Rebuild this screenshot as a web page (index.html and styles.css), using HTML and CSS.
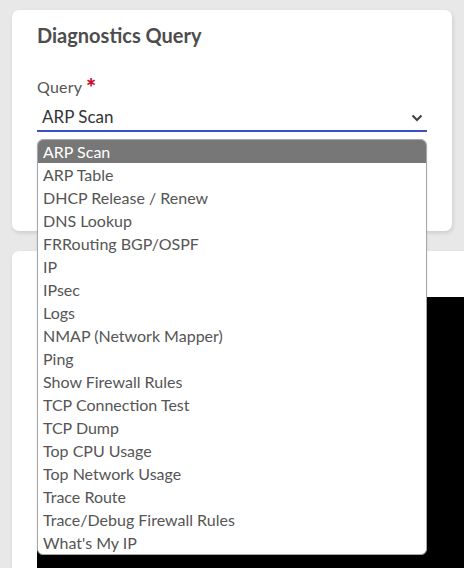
FILE: index.html
```html
<!DOCTYPE html>
<html>
<head>
<meta charset="utf-8">
<link rel="stylesheet" href="styles.css">
</head>
<body>
<div class="page">
  <section class="card card-query">
    <h2 class="title">Diagnostics Query</h2>
    <div class="field">
      <label class="label">Query <span class="req">*</span></label>
      <div class="select">
        <span class="value">ARP Scan</span>
        <svg class="chev" width="12" height="8" viewBox="0 0 12 8"><path d="M1.5 1.5 L6 6 L10.5 1.5" fill="none" stroke="#444" stroke-width="2.2"/></svg>
      </div>
      <ul class="menu">
        <li class="opt active">ARP Scan</li>
        <li class="opt">ARP Table</li>
        <li class="opt">DHCP Release / Renew</li>
        <li class="opt">DNS Lookup</li>
        <li class="opt">FRRouting BGP/OSPF</li>
        <li class="opt">IP</li>
        <li class="opt">IPsec</li>
        <li class="opt">Logs</li>
        <li class="opt">NMAP (Network Mapper)</li>
        <li class="opt">Ping</li>
        <li class="opt">Show Firewall Rules</li>
        <li class="opt">TCP Connection Test</li>
        <li class="opt">TCP Dump</li>
        <li class="opt">Top CPU Usage</li>
        <li class="opt">Top Network Usage</li>
        <li class="opt">Trace Route</li>
        <li class="opt">Trace/Debug Firewall Rules</li>
        <li class="opt">What's My IP</li>
      </ul>
    </div>
  </section>
  <section class="card card-output">
    <div class="terminal"></div>
  </section>
</div>
</body>
</html>
```
FILE: styles.css
```css
* { box-sizing: border-box; }
html, body { margin: 0; padding: 0; }
body {
  background: #e8e8e8;
  font-family: Lato, "Open Sans", sans-serif;
  color: #555;
  width: 464px;
  height: 568px;
  overflow: hidden;
}
.page {
  padding: 10px 12px 0 12px;
  display: flex;
  flex-direction: column;
  gap: 20px;
  height: 568px;
  overflow: hidden;
}
.card {
  background: #fff;
  border-radius: 7px;
  box-shadow: 1px 2px 4px rgba(0,0,0,0.12);
}
.card-query {
  height: 221px;
  flex: none;
  padding: 13px 25px 0 25px;
  position: relative;
  z-index: 2;
}
.title {
  margin: 0;
  font-size: 20px;
  font-weight: 700;
  color: #4d4d4d;
  line-height: 24px;
}
.field {
  margin-top: 30px;
  position: relative;
}
.label {
  display: block;
  font-size: 16px;
  line-height: 20px;
  color: #555;
  letter-spacing: 0.2px;
}
.req {
  color: #c8102e;
  font-weight: 900;
  font-size: 24px;
  line-height: 10px;
  vertical-align: -4px;
}
.select {
  margin-top: 9px;
  height: 26px;
  border-bottom: 2px solid #3a50c6;
  display: flex;
  align-items: flex-start;
  justify-content: space-between;
  padding: 1px 4px 0 5px;
}
.value {
  font-size: 17px;
  color: #333;
  line-height: 19px;
}
.chev { margin-top: 7px; }
.menu {
  position: absolute;
  left: 0;
  top: 62px;
  width: 390px;
  margin: 0;
  padding: 0;
  list-style: none;
  background: #fff;
  border: 1px solid #a8a8a8;
  border-radius: 6px;
  overflow: hidden;
  box-shadow: 0 1px 2px rgba(0,0,0,0.15);
}
.opt {
  height: 23px;
  line-height: 23px;
  padding-left: 5px;
  font-size: 16px;
  color: #555;
  white-space: nowrap;
}
.opt.active {
  background: #777;
  color: #fff;
}
.card-output {
  flex: 1 1 auto;
  margin-right: -12px;
  border-radius: 7px 0 0 0;
  padding: 46px 0 0 25px;
  display: flex;
  flex-direction: column;
}
.terminal {
  background: #000;
  flex: 1 1 auto;
}
```
